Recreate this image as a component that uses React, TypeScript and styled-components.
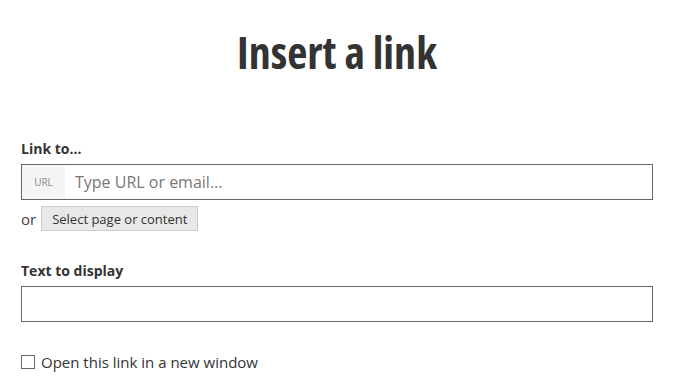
import React from 'react'
import styled, { createGlobalStyle } from 'styled-components'

const Global = createGlobalStyle`
html, body {
  margin: 0;
  background: #fff;
  font-family: "Open Sans", "DejaVu Sans", sans-serif;
  color: #333;
}
`

const App = () => {
  return (
    <Page>
      <Global />
      <Title>Insert a link</Title>

      <Field>
        <Label>Link to...</Label>
        <InputBox>
          <Prefix>URL</Prefix>
          <TextInput placeholder="Type URL or email..." />
        </InputBox>
        <OrRow>
          <span>or</span>
          <Button>Select page or content</Button>
        </OrRow>
      </Field>

      <Field>
        <Label>Text to display</Label>
        <InputBox>
          <TextInput />
        </InputBox>
      </Field>

      <CheckRow>
        <Box />
        <span>Open this link in a new window</span>
      </CheckRow>
    </Page>
  )
}

export default App

const Page = styled.div`
  width: 687px;
  height: 390px;
  box-sizing: border-box;
  padding: 24px 34px 0 21px;
  display: flex;
  flex-direction: column;
  overflow: hidden;
`
const Title = styled.h1`
  margin: 0 0 59px;
  text-align: center;
  font-size: 44px;
  line-height: 56px;
  font-weight: 700;
  font-stretch: 75%;
  color: #333;
`
const Field = styled.div`
  display: flex;
  flex-direction: column;
  margin-bottom: 30px;
`
const Label = styled.div`
  font-size: 14px;
  font-weight: 700;
  line-height: 19px;
  margin-bottom: 6px;
  color: #333;
`
const InputBox = styled.div`
  display: flex;
  height: 36px;
  box-sizing: border-box;
  border: 1px solid #666;
  background: #fff;
`
const Prefix = styled.div`
  width: 43px;
  background: #f5f5f5;
  color: #888;
  font-size: 10px;
  display: flex;
  align-items: center;
  justify-content: center;
`
const TextInput = styled.input`
  flex: 1;
  border: none;
  outline: none;
  padding: 0 10px;
  font-family: inherit;
  font-size: 16px;
  color: #333;
  background: transparent;
  &::placeholder {
    color: #777;
  }
`
const OrRow = styled.div`
  display: flex;
  align-items: center;
  gap: 5px;
  margin-top: 6px;
  font-size: 15px;
  color: #444;
`
const Button = styled.button`
  height: 25px;
  padding: 0 10px;
  background: #e8e8e8;
  border: 1px solid #ccc;
  font-family: inherit;
  font-size: 13px;
  color: #333;
`
const CheckRow = styled.label`
  display: flex;
  align-items: center;
  gap: 6px;
  margin-top: 0;
  font-size: 15px;
  color: #333;
`
const Box = styled.span`
  width: 14px;
  height: 14px;
  box-sizing: border-box;
  border: 1px solid #666;
  background: #fff;
`
